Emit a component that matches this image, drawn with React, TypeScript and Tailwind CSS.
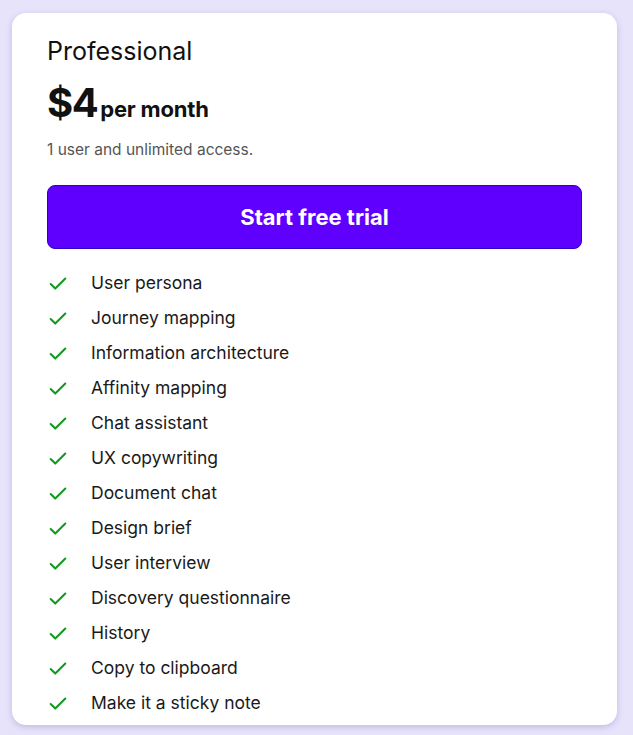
import { Check } from "lucide-react";

const FEATURES = [
  "User persona",
  "Journey mapping",
  "Information architecture",
  "Affinity mapping",
  "Chat assistant",
  "UX copywriting",
  "Document chat",
  "Design brief",
  "User interview",
  "Discovery questionnaire",
  "History",
  "Copy to clipboard",
  "Make it a sticky note",
];

export default function App() {
  return (
    <div className="min-h-screen w-full bg-[#e6e3fb] pt-[13px] pl-[12px] font-['Inter',sans-serif]">
      <div className="w-[605px] rounded-[14px] bg-white pl-[35px] pr-[35px] pt-[22px] pb-[4px] shadow-[0_2px_6px_rgba(80,70,150,0.25)]">
        <h2 className="text-[25px] leading-[32px] font-normal text-[#111]">
          Professional
        </h2>
        <div className="mt-[14px] flex items-baseline gap-[3px] text-[#111]">
          <span className="text-[40px] leading-[44px] font-bold tracking-[-1.5px]">$4</span>
          <span className="text-[22px] font-bold tracking-[-0.2px]">per month</span>
        </div>
        <p className="mt-[14px] text-[15.5px] leading-[20px] text-[#555]">
          1 user and unlimited access.
        </p>
        <button className="mt-[25px] h-[64px] w-[535px] rounded-[8px] border border-[#2c00c8] bg-[#5f00ff] text-[22px] font-bold text-white">
          Start free trial
        </button>
        <ul className="mt-[17px] flex flex-col">
          {FEATURES.map((f) => (
            <li key={f} className="flex h-[35px] items-center">
              <Check className="h-[22px] w-[22px] text-[#0f9a1c]" strokeWidth={2.2} />
              <span className="ml-[22px] text-[17.5px] text-[#1a1a1a]">{f}</span>
            </li>
          ))}
        </ul>
      </div>
    </div>
  );
}
